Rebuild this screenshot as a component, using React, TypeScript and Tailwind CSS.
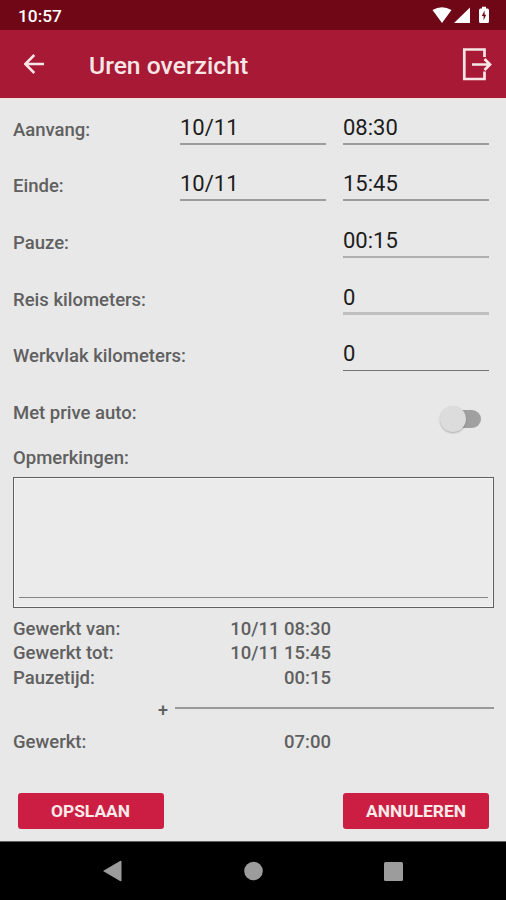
interface RowProps {
  label: string;
  date?: string;
  value: string;
  line?: string;
}

interface TotalProps {
  label: string;
  value: string;
}

const rows: RowProps[] = [
  { label: 'Aanvang:', date: '10/11', value: '08:30' },
  { label: 'Einde:', date: '10/11', value: '15:45' },
  { label: 'Pauze:', value: '00:15', line: 'border-b-2 border-[#b0b0b0]' },
  { label: 'Reis kilometers:', value: '0', line: 'border-b-[3px] border-[#bfbfbf]' },
  { label: 'Werkvlak kilometers:', value: '0', line: 'border-b border-[#747474]' },
];

const totals: TotalProps[] = [
  { label: 'Gewerkt van:', value: '10/11 08:30' },
  { label: 'Gewerkt tot:', value: '10/11 15:45' },
  { label: 'Pauzetijd:', value: '00:15' },
];

function Field({ value, line = 'border-b-2 border-[#9c9e9c]' }: { value: string; line?: string }) {
  return (
    <div className={`w-[146px] h-[31px] text-[22px] font-normal leading-[28px] text-[#1c1c1c] ${line}`}>{value}</div>
  );
}

function Row({ label, date, value, line }: RowProps) {
  return (
    <div className="flex h-[56.6px] pl-[13px] pr-[17px]">
      <span className="flex-1 pt-[17px] leading-6">{label}</span>
      <div className="flex gap-[17px] pt-[13px]">
        {date && <Field value={date} line={line} />}
        <Field value={value} line={line} />
      </div>
    </div>
  );
}

function Total({ label, value }: TotalProps) {
  return (
    <div className="flex justify-between w-[331px] h-[24.4px] leading-6 pl-[13px]">
      <span>{label}</span>
      <span>{value}</span>
    </div>
  );
}

function StatusBar() {
  return (
    <div className="flex items-center justify-between h-[30px] bg-[#700717] pl-[18px] pr-[16px] text-white">
      <span className="text-[17.3px] font-medium leading-[30px] pt-[2px]">10:57</span>
      <svg width="58" height="18" viewBox="0 0 58 18" fill="currentColor">
        <path d="M.5 4Q10-1.5 19.5 4L10 17Z" />
        <path d="M38 1.5V17H22Z" />
        <path d="M48.5 2.5H50V.8H54V2.5H55.5Q57 2.5 57 4V15.5Q57 17 55.5 17H48.5Q47 17 47 15.5V4Q47 2.5 48.5 2.5Z" />
        <path d="M52.6 4.5L49.8 10H51.6V14.2L54.2 8.8H52.6Z" fill="#700717" />
      </svg>
    </div>
  );
}

function AppBar() {
  return (
    <div className="flex items-center h-[69px] bg-[#a71935] border-b border-[#f8ded9] pl-[24px] pr-[13px] text-[#f7e6e6]">
      <svg width="21" height="20" viewBox="0 0 21 20" fill="none" stroke="currentColor" strokeWidth="2.5">
        <path d="M20 10H2M10.3 1L1.3 10L10.3 19" />
      </svg>
      <h1 className="flex-1 pl-[44px] pt-[4px] text-[24.7px] font-medium">Uren overzicht</h1>
      <svg width="31" height="34" viewBox="0 0 31 34" fill="none" stroke="currentColor" strokeWidth="2.7">
        <path d="M22.5 10V2.5H2.3V32H22.5V24.5" />
        <path d="M10 17.5H28M22.5 12L28 17.5L22.5 23" />
      </svg>
    </div>
  );
}

function Button({ children }: { children: string }) {
  return (
    <button className="w-[146px] h-[36px] pt-[2px] rounded-[3px] bg-[#cb1e42] text-[17.4px] font-bold text-[#fbeaea]">
      {children}
    </button>
  );
}

function NavBar() {
  return (
    <div className="flex h-[59px] border-t border-[#606060] bg-black pt-[18px] pl-[102px]">
      <svg width="303" height="22" viewBox="0 0 303 22" fill="#9c9c9c">
        <path d="M1 11L18 1Q19.5 0 19.5 2V20Q19.5 22 18 21Z" />
        <circle cx="151.5" cy="11" r="9.3" />
        <rect x="282" y="2" width="19" height="19" rx="1.5" />
      </svg>
    </div>
  );
}

export default function App() {
  return (
    <div className="flex flex-col w-[506px] h-[900px] overflow-hidden bg-[#e8e8e8] font-['Roboto',sans-serif] text-[18.5px] font-medium text-[#606060]">
      <StatusBar />
      <AppBar />
      <div className="flex flex-col flex-1 pt-[1.8px]">
        {rows.map(row => (
          <Row key={row.label} {...row} />
        ))}
        <div className="flex justify-between h-[56.2px] pl-[13px] pr-[25px]">
          <span className="pt-[17px] leading-6">Met prive auto:</span>
          <div className="relative mt-[26px] w-[32px] h-[18px] rounded-full bg-[#a0a0a0]">
            <div className="absolute -left-[9px] -top-[4px] size-[26px] rounded-full bg-[#dcdcdc] shadow-[0_1px_2px_rgba(0,0,0,0.25)]" />
          </div>
        </div>
        <span className="h-[37px] pl-[13px] pt-[6px] leading-6">Opmerkingen:</span>
        <div className="flex flex-col justify-end ml-[13px] mr-[12px] h-[131px] border border-[#606060] bg-[#ebebeb] px-[5px] pb-[9px] shadow-[inset_0_0_0_1px_#f3f3f3]">
          <div className="h-px bg-[#858585]" />
        </div>
        <div className="pt-[9px]">
          {totals.map(total => (
            <Total key={total.label} {...total} />
          ))}
        </div>
        <div className="flex h-[40px] pl-[158px] pr-[12px] pt-[7px]">
          <span className="w-[17px] text-[18px] leading-[25px]">+</span>
          <div className="mt-[10px] h-[2px] flex-1 bg-[#989a98]" />
        </div>
        <Total label="Gewerkt:" value="07:00" />
        <div className="flex justify-between pl-[17.5px] pr-[17px] pt-[38px]">
          <Button>OPSLAAN</Button>
          <Button>ANNULEREN</Button>
        </div>
      </div>
      <NavBar />
    </div>
  );
}
